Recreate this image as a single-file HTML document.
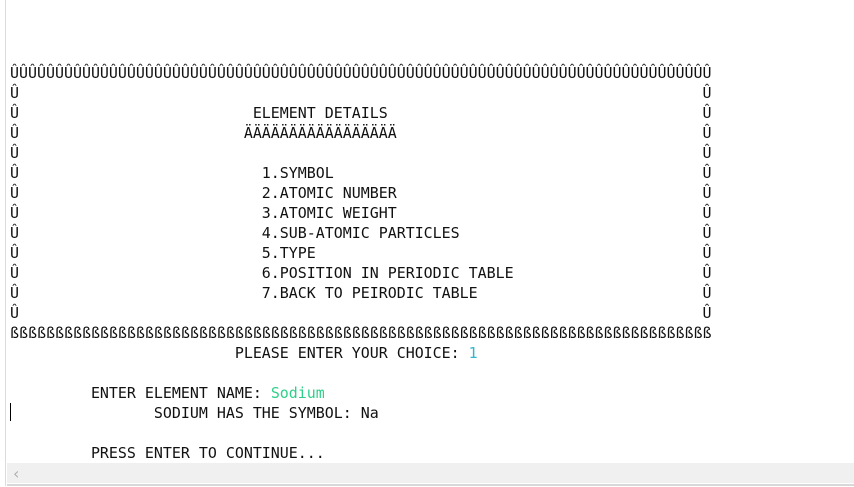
<!DOCTYPE html>
<html><head><meta charset="utf-8"><style>
html,body{margin:0;padding:0;background:#fff;width:854px;height:487px;overflow:hidden;position:relative}
.t{position:absolute;left:10px;top:63px;margin:0;font-family:"DejaVu Sans Mono","Liberation Mono",monospace;font-size:14.95px;line-height:20px;color:#111;white-space:pre;letter-spacing:0}
.g{color:#2ecf8a}.c{color:#2fb8c8}
</style></head><body>
<div style="position:absolute;left:5px;top:0;width:1px;height:486px;background:#d6dce8"></div>
<pre class="t">ÛÛÛÛÛÛÛÛÛÛÛÛÛÛÛÛÛÛÛÛÛÛÛÛÛÛÛÛÛÛÛÛÛÛÛÛÛÛÛÛÛÛÛÛÛÛÛÛÛÛÛÛÛÛÛÛÛÛÛÛÛÛÛÛÛÛÛÛÛÛÛÛÛÛÛÛÛÛ
Û                                                                            Û
Û                          ELEMENT DETAILS                                   Û
Û                         ÄÄÄÄÄÄÄÄÄÄÄÄÄÄÄÄÄ                                  Û
Û                                                                            Û
Û                           1.SYMBOL                                         Û
Û                           2.ATOMIC NUMBER                                  Û
Û                           3.ATOMIC WEIGHT                                  Û
Û                           4.SUB-ATOMIC PARTICLES                           Û
Û                           5.TYPE                                           Û
Û                           6.POSITION IN PERIODIC TABLE                     Û
Û                           7.BACK TO PEIRODIC TABLE                         Û
Û                                                                            Û
ßßßßßßßßßßßßßßßßßßßßßßßßßßßßßßßßßßßßßßßßßßßßßßßßßßßßßßßßßßßßßßßßßßßßßßßßßßßßßß
                         PLEASE ENTER YOUR CHOICE: <span class="c">1</span>

         ENTER ELEMENT NAME: <span class="g">Sodium</span>
                SODIUM HAS THE SYMBOL: Na

         PRESS ENTER TO CONTINUE...</pre>
<div style="position:absolute;left:10px;top:403px;width:1px;height:18px;background:#000"></div>
<div style="position:absolute;left:7px;top:463px;width:847px;height:20px;background:#f0f0f0"></div>
<div style="position:absolute;left:13px;top:464px;font:16px 'DejaVu Sans',sans-serif;color:#b0b0b0">‹</div>
<div style="position:absolute;left:7px;top:484px;width:847px;height:2px;background:#d8d8d8"></div>
</body></html>
